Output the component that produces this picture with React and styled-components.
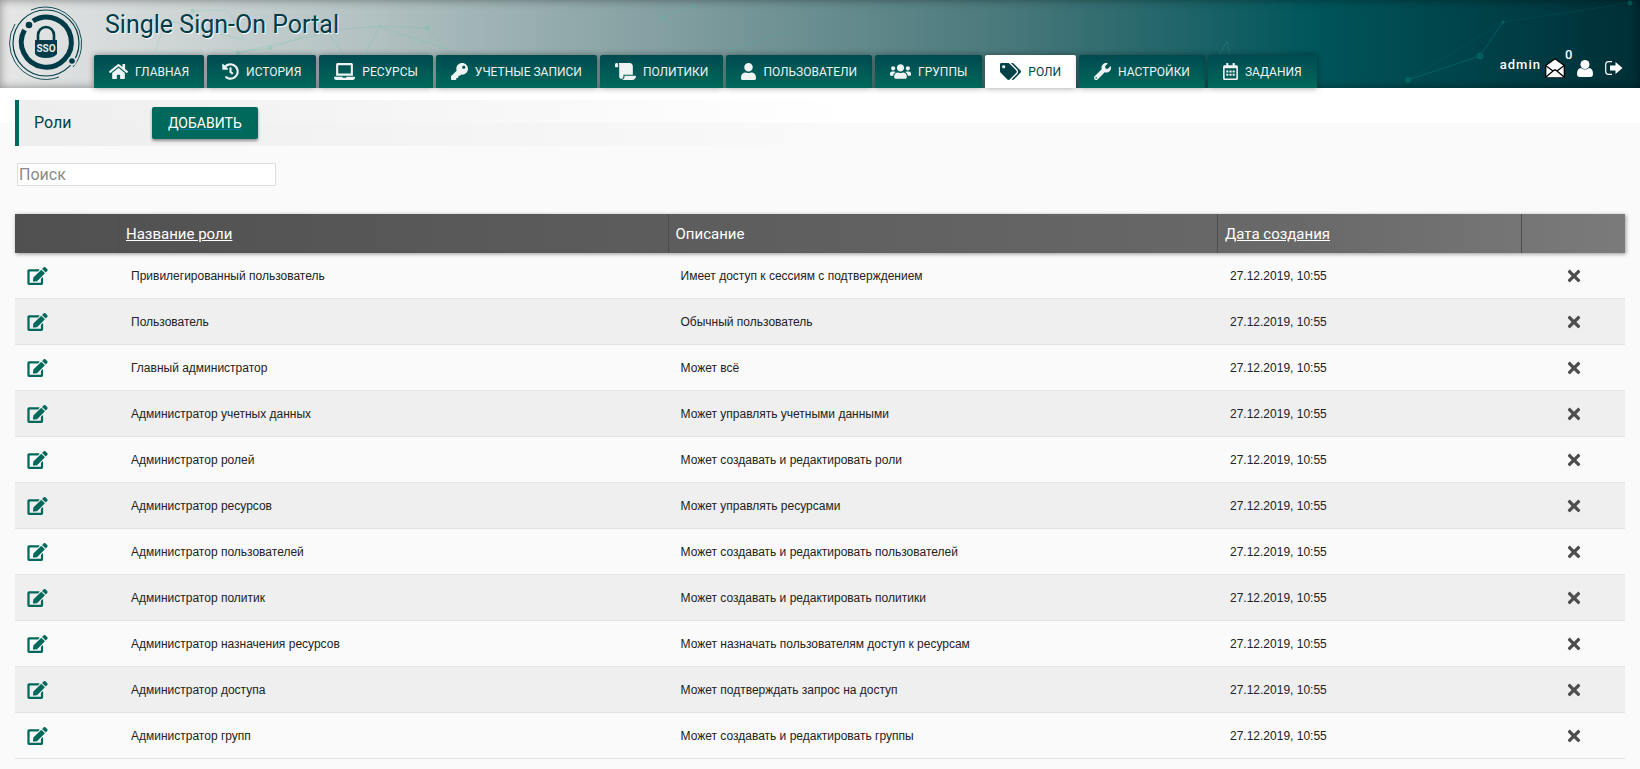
import React, { useState } from "react";
import styled, { createGlobalStyle, css } from "styled-components";
import {
  FaHome,
  FaHistory,
  FaLaptop,
  FaKey,
  FaScroll,
  FaUser,
  FaUsers,
  FaTags,
  FaWrench,
  FaRegCalendarAlt,
  FaEdit,
  FaTimes,
} from "react-icons/fa";

const tabs = [
  { id: "home", title: "Главная", icon: FaHome, width: 19 },
  { id: "history", title: "История", icon: FaHistory, width: 17 },
  { id: "resources", title: "Ресурсы", icon: FaLaptop, width: 21 },
  { id: "accounts", title: "Учетные записи", icon: FaKey, width: 17 },
  { id: "policies", title: "Политики", icon: FaScroll, width: 21 },
  { id: "users", title: "Пользователи", icon: FaUser, width: 15 },
  { id: "groups", title: "Группы", icon: FaUsers, width: 21 },
  { id: "roles", title: "Роли", icon: FaTags, width: 21 },
  { id: "settings", title: "Настройки", icon: FaWrench, width: 17 },
  { id: "tasks", title: "Задания", icon: FaRegCalendarAlt, width: 15 },
];

const created = "27.12.2019, 10:55";

const roles = [
  { name: "Привилегированный пользователь", description: "Имеет доступ к сессиям с подтверждением" },
  { name: "Пользователь", description: "Обычный пользователь" },
  { name: "Главный администратор", description: "Может всё" },
  { name: "Администратор учетных данных", description: "Может управлять учетными данными" },
  { name: "Администратор ролей", description: "Может создавать и редактировать роли" },
  { name: "Администратор ресурсов", description: "Может управлять ресурсами" },
  { name: "Администратор пользователей", description: "Может создавать и редактировать пользователей" },
  { name: "Администратор политик", description: "Может создавать и редактировать политики" },
  { name: "Администратор назначения ресурсов", description: "Может назначать пользователям доступ к ресурсам" },
  { name: "Администратор доступа", description: "Может подтверждать запрос на доступ" },
  { name: "Администратор групп", description: "Может создавать и редактировать группы" },
];

function Logo() {
  return (
    <svg width="76" height="76" viewBox="0 0 76 76" fill="none" stroke="#003c47">
      <circle cx="37" cy="37" r="33" strokeWidth="1.2" />
      <path d="M22 4a36 36 0 0 1 48 20a36 36 0 0 1-6 37M50 71a36 36 0 0 1-44-15a36 36 0 0 1 0-38" strokeWidth="0.9" />
      <path d="M24 15a25 25 0 1 1-8.500 9" strokeWidth="5" />
      <circle cx="20" cy="19" r="3.300" fill="#003c47" stroke="none" />
      <circle cx="63" cy="55" r="4.500" fill="#dcdfe0" stroke="none" />
      <circle cx="63" cy="55" r="2.800" fill="#003c47" stroke="none" />
      <path d="M29 35v-6a8 8 0 0 1 16 0v6" strokeWidth="2.600" />
      <path d="M26 34h22v14q-3 4-11 4t-11-4z" fill="#003c47" stroke="none" />
      <text
        x="37"
        y="46"
        textAnchor="middle"
        fontFamily="Roboto, sans-serif"
        fontSize="10"
        fontWeight="700"
        fill="#e6e8e8"
        stroke="none"
      >
        SSO
      </text>
    </svg>
  );
}

function EnvelopeIcon() {
  return (
    <svg width="20" height="20" viewBox="0 0 20 20" fill="#fff" stroke="#000" strokeWidth="1.300">
      <path d="M0.700 7.500L10 0.800l9.300 6.700v11.800H0.700z" />
      <path d="M0.700 7.500l7.300 5.500M19.300 7.500l-7.300 5.500M0.700 19.300l7.300-6.300q2-2 4 0l7.300 6.300" />
    </svg>
  );
}

function PersonIcon() {
  return (
    <svg width="16" height="17" viewBox="0 0 16 17" fill="#fff">
      <circle cx="8" cy="4.500" r="4.500" />
      <path d="M4 8q4 3 8 0q4 0.500 4 6q0 3-3 3H3q-3 0-3-3q0-5.500 4-6z" />
    </svg>
  );
}

function ExitIcon() {
  return (
    <svg width="18" height="14" viewBox="0 0 18 14" fill="none">
      <path d="M7 0.700H3.500Q0.700 0.700 0.700 3.500v7Q0.700 13.300 3.500 13.300H7" stroke="#fff" strokeWidth="1.200" />
      <path d="M5 4.500h5.500V1L17.500 7l-7 6V9.500H5z" fill="#fff" />
    </svg>
  );
}

function Network() {
  return (
    <NetworkSvg viewBox="0 0 1640 88" preserveAspectRatio="xMidYMid slice" aria-hidden="true">
      <g stroke="#3fc79a" fill="#3fc79a" opacity="0.250" strokeWidth="0.700">
        <path d="M193 11L228 10L244 40L166 20L155 52M236 53L272 48L310 34M236 53L345 29L380 26L427 28L447 49L380 27L366 52M330 36L343 53M660 18L694 6M731 49L789 32M663 18L676 33M1219 55L1227 41L1230 55" fill="none" />
        <circle cx="193" cy="11" r="2" />
        <circle cx="238" cy="53" r="2" />
        <circle cx="270" cy="48" r="2" />
        <circle cx="427" cy="28" r="2" />
        <circle cx="380" cy="26" r="1" />
        <circle cx="663" cy="18" r="2" />
        <circle cx="694" cy="6" r="2" />
        <circle cx="731" cy="49" r="1" />
      </g>
      <g stroke="#00897b" fill="#00796b" opacity="0.500">
        <path d="M1408 80L1480 56L1503 22" strokeWidth="0.800" fill="none" />
        <path d="M1503 22L1408 80M1503 22L1630 3" strokeWidth="0.300" fill="none" />
        <circle cx="1408" cy="80" r="2.500" />
        <circle cx="1480" cy="56" r="3" />
        <circle cx="1503" cy="22" r="1.200" />
        <circle cx="1630" cy="3" r="2" />
      </g>
    </NetworkSvg>
  );
}

function App() {
  const [active, setActive] = useState("roles");
  const [search, setSearch] = useState("");

  const visible = roles.filter((role) => role.name.toLowerCase().includes(search.toLowerCase()));

  return (
    <>
      <GlobalStyle />
      <Header>
        <Network />
        <LogoLink href="#" aria-label="SSO">
          <Logo />
        </LogoLink>
        <HeaderMain>
          <Title>Single Sign-On Portal</Title>
          <Nav>
            {tabs.map(({ id, title, icon: Icon, width }) => (
              <Tab
                key={id}
                href={"#" + id}
                $active={id === active}
                $iconWidth={width}
                onClick={() => setActive(id)}
              >
                <Icon />
                {title}
              </Tab>
            ))}
          </Nav>
        </HeaderMain>
        <UserPanel>
          <UserName>admin</UserName>
          <IconButton aria-label="Сообщения">
            <EnvelopeIcon />
            <Counter>0</Counter>
          </IconButton>
          <IconButton aria-label="Профиль">
            <PersonIcon />
          </IconButton>
          <IconButton aria-label="Выход">
            <ExitIcon />
          </IconButton>
        </UserPanel>
      </Header>

      <Main>
        <PageBar>
          <PageTitle>Роли</PageTitle>
          <AddButton>Добавить</AddButton>
        </PageBar>

        <Search
          type="text"
          placeholder="Поиск"
          aria-label="Поиск"
          value={search}
          onChange={(e) => setSearch(e.target.value)}
        />

        <Table>
          <colgroup>
            <Col $width="104px" />
            <Col />
            <Col />
            <Col $width="304px" />
            <Col $width="103px" />
          </colgroup>
          <Head>
            <tr>
              <Th />
              <Th>
                <SortButton>Название роли</SortButton>
              </Th>
              <Th>Описание</Th>
              <Th>
                <SortButton>Дата создания</SortButton>
              </Th>
              <Th />
            </tr>
          </Head>
          <tbody>
            {visible.map((role) => (
              <Row key={role.name}>
                <Td>
                  <EditButton aria-label="Редактировать">
                    <FaEdit />
                  </EditButton>
                </Td>
                <Td>{role.name}</Td>
                <Td>{role.description}</Td>
                <Td>{created}</Td>
                <Td $center>
                  <DeleteButton aria-label="Удалить">
                    <FaTimes />
                  </DeleteButton>
                </Td>
              </Row>
            ))}
          </tbody>
        </Table>
      </Main>
    </>
  );
}

const GlobalStyle = createGlobalStyle`
  * {
    box-sizing: border-box;
  }
  body {
    margin: 0;
    background: #fafafa;
    font-family: Roboto, sans-serif;
  }
  button {
    font-family: inherit;
    border: none;
    background: none;
    padding: 0;
    cursor: pointer;
  }
`;

const Header = styled.header`
  position: relative;
  display: flex;
  height: 88px;
  background: linear-gradient(90deg, #e6e6e6 0%, #b1c0c1 23%, #7c9a9c 43%, #47777a 62%, #00565b 80%, #002e36 100%);
  box-shadow: inset 0 0 10px rgba(0, 0, 0, 0.4);
`;

const NetworkSvg = styled.svg`
  position: absolute;
  top: 0;
  left: 0;
  width: 100%;
  height: 100%;
`;

const LogoLink = styled.a`
  position: relative;
  width: 94px;
  padding: 6px 9px;
`;

const HeaderMain = styled.div`
  position: relative;
  flex: 1;
  display: flex;
  flex-direction: column;
  justify-content: space-between;
`;

const Title = styled.h1`
  margin: 0;
  padding: 9px 0 0 11px;
  font-size: 25px;
  line-height: 32px;
  font-weight: 400;
  color: #003c47;
  text-shadow: 1px 1px 1px #fff;
`;

const Nav = styled.nav`
  display: flex;
  gap: 3px;
`;

const Tab = styled.a`
  display: flex;
  align-items: center;
  gap: 7px;
  height: 33px;
  padding: 0 15px;
  border-radius: 2px 2px 0 0;
  font-size: 12px;
  text-transform: uppercase;
  text-decoration: none;
  white-space: nowrap;
  color: #eef3f3;
  background: linear-gradient(#004a50, #00695c);
  box-shadow: 0 0 6px rgba(0, 0, 0, 0.4);

  ${(props) =>
    props.$active &&
    css`
      color: #004147;
      background: #fff;
    `}

  svg {
    width: ${(props) => props.$iconWidth}px;
    height: 17px;
  }
`;

const UserPanel = styled.div`
  position: relative;
  display: flex;
  align-items: center;
  gap: 12px;
  padding: 48px 17px 0 0;
`;

const UserName = styled.span`
  margin-right: -8px;
  padding-bottom: 8px;
  font-size: 13px;
  font-weight: 500;
  letter-spacing: 1px;
  color: #fff;
`;

const IconButton = styled.button`
  position: relative;
  display: flex;
`;

const Counter = styled.span`
  position: absolute;
  top: -11px;
  left: 20px;
  font-size: 13px;
  font-weight: 500;
  color: #fff;
`;

const Main = styled.main`
  padding: 12px 15px 10px;
  background: linear-gradient(#fff 35px, #fafafa 35px);
`;

const PageBar = styled.div`
  display: flex;
  align-items: center;
  height: 46px;
  border-left: 4px solid #00695c;
  background: linear-gradient(90deg, #eee, rgba(255, 255, 255, 0) 52%);
`;

const PageTitle = styled.h2`
  width: 133px;
  margin: 0;
  padding: 0 0 2px 15px;
  font-size: 16px;
  font-weight: 400;
  color: #00424a;
`;

const AddButton = styled.button`
  height: 32px;
  padding: 0 16px;
  border-radius: 2px;
  font-size: 14px;
  text-transform: uppercase;
  text-decoration: underline #0277a0;
  color: #fff;
  background: #00695c;
  box-shadow: 0 2px 3px rgba(0, 0, 0, 0.4);
`;

const Search = styled.input`
  display: block;
  width: 259px;
  height: 23px;
  margin: 17px 2px 28px;
  padding: 0 1px;
  border: 1px solid #ddd;
  font-family: inherit;
  font-size: 16px;
  background: #fff;

  &::placeholder {
    color: #8a8a8a;
  }
`;

const Table = styled.table`
  width: 100%;
  table-layout: fixed;
  border-collapse: separate;
  border-spacing: 0;
`;

const Col = styled.col`
  width: ${(props) => props.$width || "auto"};
`;

const Head = styled.thead`
  background: linear-gradient(90deg, #505050, #696969 80%, #7b7b7b);
  box-shadow: 1px 1px 4px rgba(0, 0, 0, 0.4);
`;

const Th = styled.th`
  height: 39px;
  padding: 0 7px;
  border-right: 1px solid #4d4d4d;
  font-size: 15px;
  font-weight: 400;
  text-align: left;
  color: #fff;

  &:last-child {
    border-right: none;
  }
`;

const SortButton = styled.button`
  font-size: 15px;
  text-decoration: underline;
  color: #fff;
`;

const Row = styled.tr`
  &:nth-child(even) {
    background: #efefef;
  }
`;

const Td = styled.td`
  height: 46px;
  padding: 0 12px;
  border-bottom: 1px solid #e2e2e2;
  font-family: "Liberation Sans", Arial, sans-serif;
  font-size: 12px;
  color: #222;
  text-align: ${(props) => (props.$center ? "center" : "left")};
`;

const EditButton = styled.button`
  display: flex;

  svg {
    width: 21px;
    height: 18px;
    color: #00695c;
  }
`;

const DeleteButton = styled.button`
  display: inline-flex;
  vertical-align: middle;

  svg {
    width: 18px;
    height: 18px;
    color: #4d4d4d;
  }
`;

export default App;
